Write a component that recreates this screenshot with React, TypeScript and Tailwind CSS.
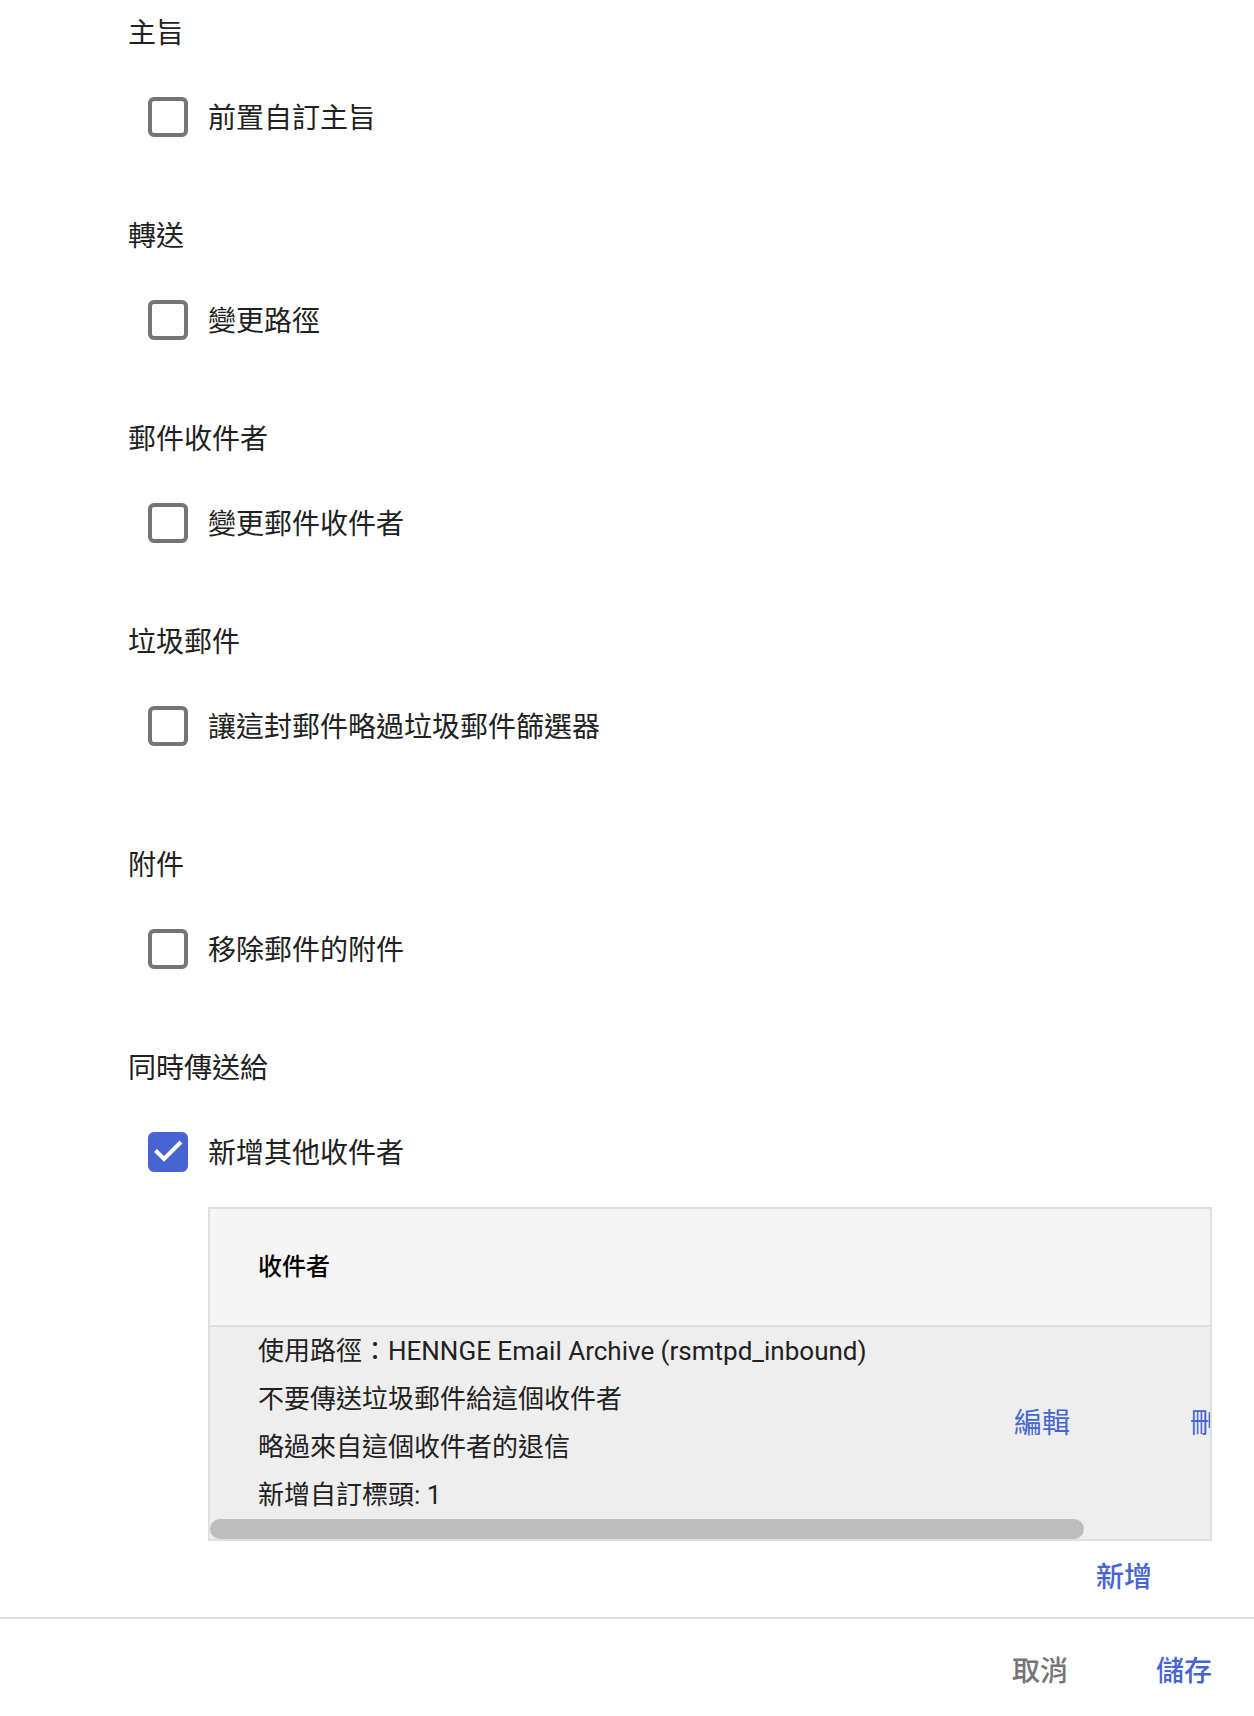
import { useEffect, useId, useRef, useState } from "react";
import type { ReactNode } from "react";

type Option = {
  heading: string;
  label: string;
  checked?: boolean;
  className?: string;
};

const options: Option[] = [
  { heading: "主旨", label: "前置自訂主旨" },
  { heading: "轉送", label: "變更路徑" },
  { heading: "郵件收件者", label: "變更郵件收件者" },
  { heading: "垃圾郵件", label: "讓這封郵件略過垃圾郵件篩選器", className: "pb-5" },
  { heading: "附件", label: "移除郵件的附件" },
];

const recipientLines = [
  "使用路徑：HENNGE Email Archive (rsmtpd_inbound)",
  "不要傳送垃圾郵件給這個收件者",
  "略過來自這個收件者的退信",
  "新增自訂標頭: 1",
];

const OptionSection = ({
  heading,
  label,
  checked = false,
  className = "",
  children,
}: Option & { children?: ReactNode }) => {
  const id = useId();

  return (
    <section className={className}>
      <h2 className="leading-10">{heading}</h2>
      <div className="mt-[43px] flex items-center gap-5 pl-5">
        <span className="grid size-10 shrink-0">
          <input
            id={id}
            type="checkbox"
            defaultChecked={checked}
            className="peer col-start-1 row-start-1 size-10 appearance-none rounded-md border-4 border-[#757575] bg-white checked:border-[#4765d2] checked:bg-[#4765d2]"
          />
          <svg
            viewBox="0 0 40 40"
            className="pointer-events-none invisible col-start-1 row-start-1 size-10 peer-checked:visible"
            aria-hidden="true"
          >
            <path d="M7.5 18.5 16 27 33 10" fill="none" stroke="#fff" strokeWidth="4" />
          </svg>
        </span>
        <label htmlFor={id} className="pt-1 leading-9">
          {label}
        </label>
      </div>
      {children}
    </section>
  );
};

const RecipientTable = () => {
  const scroller = useRef<HTMLDivElement>(null);
  const [thumb, setThumb] = useState({ width: 100, left: 0 });

  const updateThumb = () => {
    const el = scroller.current;
    if (!el) return;
    setThumb({
      width: (el.clientWidth / el.scrollWidth) * 100,
      left: (el.scrollLeft / el.scrollWidth) * 100,
    });
  };

  useEffect(() => {
    updateThumb();
    window.addEventListener("resize", updateThumb);
    return () => window.removeEventListener("resize", updateThumb);
  }, []);

  return (
    <div className="border-2 border-[#e0e0e0] bg-[#eeeeee]">
      <div ref={scroller} onScroll={updateThumb} className="overflow-x-auto [scrollbar-width:none]">
        <table className="w-full min-w-[1144px] table-fixed border-separate border-spacing-0 text-left">
          <thead>
            <tr className="bg-[#f5f5f5]">
              <th className="h-[118px] border-b-2 border-[#e0e0e0] pl-12 text-2xl font-medium text-black">收件者</th>
              <th className="w-44 border-b-2 border-[#e0e0e0]" />
              <th className="w-[164px] border-b-2 border-[#e0e0e0]" />
            </tr>
          </thead>
          <tbody>
            <tr>
              <td className="pl-12 text-[26px]">
                {recipientLines.map((line) => (
                  <p key={line} className="leading-[48px]">
                    {line}
                  </p>
                ))}
              </td>
              <td>
                <button type="button" className="pt-0.5 text-[#4765d2]">
                  編輯
                </button>
              </td>
              <td>
                <button type="button" className="pt-0.5 text-[#4765d2]">
                  刪除
                </button>
              </td>
            </tr>
          </tbody>
        </table>
      </div>
      <div className="h-5">
        <div
          className="h-5 rounded-full bg-[#bdbdbd]"
          style={{ width: `${thumb.width}%`, marginLeft: `${thumb.left}%` }}
        />
      </div>
    </div>
  );
};

const App = () => {
  return (
    <div
      lang="zh-Hant"
      className="bg-white font-['Roboto','Noto_Sans_CJK_TC',sans-serif] text-[28px] text-[#212121]"
    >
      <main className="flex flex-col gap-20 pt-[14px] pr-[42px] pb-[19px] pl-32">
        {options.map((option) => (
          <OptionSection key={option.heading} {...option} />
        ))}
        <OptionSection heading="同時傳送給" label="新增其他收件者" checked>
          <div className="mt-[35px] pl-20">
            <RecipientTable />
            <div className="mt-[17px] flex justify-end pr-[60px]">
              <button type="button" className="leading-10 font-medium text-[#4765d2]">
                新增
              </button>
            </div>
          </div>
        </OptionSection>
      </main>

      <footer className="flex justify-end gap-[88px] border-t-2 border-[#e0e0e0] pt-[33px] pr-[42px] pb-6 leading-10 font-medium">
        <button type="button" className="text-[#757575]">
          取消
        </button>
        <button type="button" className="text-[#4765d2]">
          儲存
        </button>
      </footer>
    </div>
  );
};

export default App;
